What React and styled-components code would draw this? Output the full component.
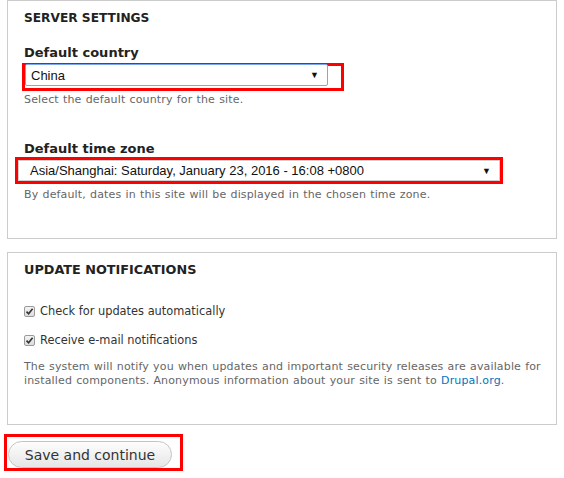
import styled, { createGlobalStyle } from 'styled-components';

const GlobalStyle = createGlobalStyle`
  html, body {
    margin: 0;
    padding: 0;
    background: #ffffff;
  }
  body {
    font-family: "DejaVu Sans", Verdana, sans-serif;
    color: #333;
  }
`;

const Page = styled.div`
  width: 564px;
  height: 478px;
  padding: 0 0 0 7px;
  box-sizing: border-box;
  overflow: hidden;
`;

const Fieldset = styled.section`
  width: 550px;
  box-sizing: border-box;
  border: 1px solid #cccccc;
  padding: ${p => p.$pad || '9px 16px 0'};
  height: ${p => p.$height}px;
  margin-bottom: ${p => p.$gap || 0}px;
`;

const Legend = styled.h2`
  margin: 0;
  font-size: ${p => p.$size || 13}px;
  line-height: 16px;
  font-weight: bold;
  color: #222;
  text-transform: uppercase;
`;

const Label = styled.label`
  display: block;
  margin-top: ${p => p.$top}px;
  font-size: 13px;
  line-height: 16px;
  font-weight: bold;
  color: #222;
`;

const Highlight = styled.div`
  display: inline-block;
  border: 3px solid #ff0000;
  padding: ${p => p.$pad || '0'};
  margin-left: ${p => p.$shift || 0}px;
`;

const SelectBox = styled.div`
  display: flex;
  align-items: center;
  justify-content: space-between;
  box-sizing: border-box;
  width: ${p => p.$width}px;
  height: ${p => p.$height}px;
  margin: ${p => p.$margin || '0'};
  padding: 0 8px 0 ${p => p.$indent || 5}px;
  border: 1px solid ${p => (p.$focus ? '#7aa7ef' : '#cfcfcf')};
  border-radius: ${p => (p.$focus ? '2px' : '0')};
  background: #fff;
  font-family: "Liberation Sans", Arial, sans-serif;
  font-size: 13px;
  color: #111;
`;

const Arrow = styled.span`
  font-size: 9px;
  color: #111;
`;

const Description = styled.p`
  margin: ${p => p.$margin || '2px 0 0'};
  font-size: 11px;
  line-height: 14px;
  letter-spacing: 0.15px;
  word-spacing: 0.5px;
  color: #666;
  white-space: nowrap;
`;

const Link = styled.a`
  color: #0074bd;
  text-decoration: none;
`;

const CheckRow = styled.div`
  display: flex;
  align-items: center;
  gap: 5px;
  margin-top: ${p => p.$top}px;
  font-size: 11.4px;
  line-height: 16px;
  color: #333;
`;

const Box = styled.span`
  display: inline-flex;
  align-items: center;
  justify-content: center;
  width: 11px;
  height: 11px;
  box-sizing: border-box;
  border: 1px solid #9a9a9a;
  border-radius: 2px;
  background: linear-gradient(#f4f4f4, #dcdcdc);
`;

const ButtonFrame = styled.div`
  display: inline-block;
  margin: 9px 0 0 -3px;
  border: 3px solid #ff0000;
  padding: 4px 8px 0 1px;
`;

const Button = styled.button`
  display: block;
  width: 164px;
  height: 27px;
  border: 1px solid #c4c4c4;
  border-radius: 14px;
  background: linear-gradient(#fdfdfd, #e6e6e6);
  font-family: "DejaVu Sans", Verdana, sans-serif;
  font-size: 14px;
  color: #333;
  padding: 0;
`;

const Check = () => (
  <Box>
    <svg width="9" height="9" viewBox="0 0 9 9">
      <path d="M1.5 4.6 L3.6 6.8 L7.6 1.8" fill="none" stroke="#333" strokeWidth="1.6" />
    </svg>
  </Box>
);

export default function App() {
  return (
    <Page>
      <GlobalStyle />
      <Fieldset $height={239} $gap={13}>
        <Legend $size={12.2}>Server settings</Legend>
        <Label $top={19}>Default country</Label>
        <Highlight $pad="0 13px 2px 0" $shift={-2} style={{ marginTop: 2 }}>
          <SelectBox $focus $width={303} $height={22} $margin="-2px 0 0 0">
            <span>China</span>
            <Arrow>▼</Arrow>
          </SelectBox>
        </Highlight>
        <Description>Select the default country for the site.</Description>
        <Label $top={34}>Default time zone</Label>
        <Highlight $shift={-9}>
          <SelectBox $width={482} $height={21} $indent={11}>
            <span>Asia/Shanghai: Saturday, January 23, 2016 - 16:08 +0800</span>
            <Arrow>▼</Arrow>
          </SelectBox>
        </Highlight>
        <Description $margin="4px 0 0">
          By default, dates in this site will be displayed in the chosen time zone.
        </Description>
      </Fieldset>

      <Fieldset $height={173}>
        <Legend $size={12.8}>Update notifications</Legend>
        <CheckRow $top={25}>
          <Check />
          <span>Check for updates automatically</span>
        </CheckRow>
        <CheckRow $top={13}>
          <Check />
          <span>Receive e-mail notifications</span>
        </CheckRow>
        <Description $margin="12px 0 0">
          The system will notify you when updates and important security releases are available for
          <br />
          installed components. Anonymous information about your site is sent to{' '}
          <Link href="#">Drupal.org</Link>.
        </Description>
      </Fieldset>

      <ButtonFrame>
        <Button>Save and continue</Button>
      </ButtonFrame>
    </Page>
  );
}
